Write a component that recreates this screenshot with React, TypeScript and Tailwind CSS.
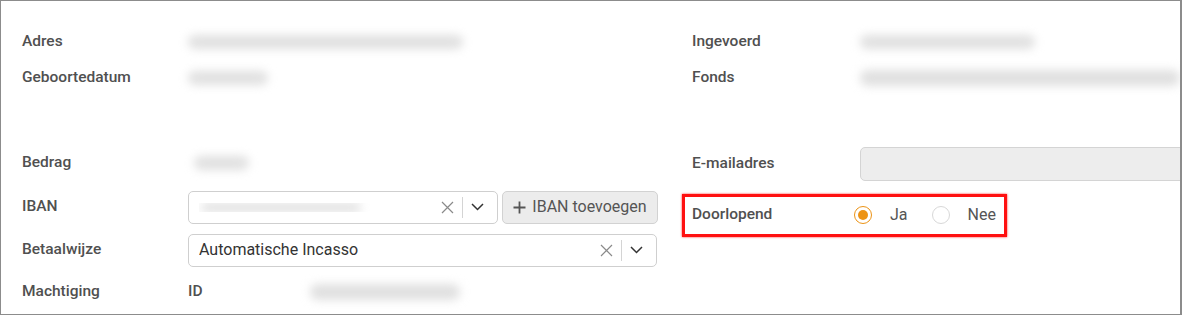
import React from "react";

const font = { fontFamily: "Roboto, 'Noto Sans', Arial, sans-serif" };

function Blur({ w, h = 14 }: { w: number; h?: number }) {
  return <div className="rounded-full bg-[#e0e0e0] blur-[5px]" style={{ width: w, height: h }} />;
}

function Label({ children, w }: { children: React.ReactNode; w: string }) {
  return <div className={`${w} shrink-0 text-[15.5px] font-medium text-[#505050]`}>{children}</div>;
}

function ClearIcon() {
  return (
    <svg width="13" height="13" viewBox="0 0 13 13" className="text-[#8a8a8a]">
      <path d="M1 1 L12 12 M12 1 L1 12" stroke="currentColor" strokeWidth="1.2" fill="none" />
    </svg>
  );
}

function Chevron() {
  return (
    <svg width="13" height="8" viewBox="0 0 13 8" className="text-[#333]">
      <path d="M1 1 L6.5 6.5 L12 1" stroke="currentColor" strokeWidth="1.5" fill="none" />
    </svg>
  );
}

function Select({ width, children }: { width: string; children: React.ReactNode }) {
  return (
    <div className={`${width} flex h-[33px] items-center rounded-[5px] border border-[#cfcfcf] bg-white pl-[10px]`}>
      <div className="flex-1 truncate text-[16px] text-[#333]">{children}</div>
      <div className="flex h-full items-center pr-[1px]">
        <div className="px-[4px]"><ClearIcon /></div>
        <div className="mx-[4px] h-[21px] w-px bg-[#d4d4d4]" />
        <div className="pl-[4px] pr-[12px]"><Chevron /></div>
      </div>
    </div>
  );
}

function Radio({ checked, label }: { checked?: boolean; label: string }) {
  return (
    <div className="flex items-center">
      <div
        className={`flex h-[18px] w-[18px] items-center justify-center rounded-full border ${
          checked ? "border-[#ec9315]" : "border-[#d8d8d8]"
        }`}
      >
        {checked && <div className="h-[10px] w-[10px] rounded-full bg-[#ec9315]" />}
      </div>
      <span className="ml-[18px] text-[16px] text-[#555]">{label}</span>
    </div>
  );
}

export default function App() {
  return (
    <div style={font} className="h-[315px] w-[1182px] overflow-hidden border border-r-2 border-[#8c8c8c] bg-white">
      <div className="flex pt-[23px]">
        {/* left column */}
        <div className="flex w-[691px] shrink-0 flex-col pl-[21px]">
          <div className="flex h-[36px] items-center">
            <Label w="w-[166px]">Adres</Label>
            <Blur w={275} />
          </div>
          <div className="flex h-[36px] items-center">
            <Label w="w-[166px]">Geboortedatum</Label>
            <Blur w={80} />
          </div>
          <div className="mt-[49px] flex h-[36px] items-center">
            <Label w="w-[166px]">Bedrag</Label>
            <div className="pl-[6px]"><Blur w={55} /></div>
          </div>
          <div className="mt-[8px] flex h-[36px] items-center">
            <Label w="w-[166px]">IBAN</Label>
            <Select width="w-[310px]">
              <div className="pl-[2px]"><Blur w={160} h={9} /></div>
            </Select>
            <button className="ml-[4px] flex h-[33px] w-[156px] items-center justify-center gap-[6px] rounded-[5px] border border-[#d2d2d2] bg-[#ececec] text-[16px] text-[#555]">
              <svg width="13" height="13" viewBox="0 0 13 13">
                <path d="M6.5 0.5 V12.5 M0.5 6.5 H12.5" stroke="#555" strokeWidth="1.8" />
              </svg>
              IBAN toevoegen
            </button>
          </div>
          <div className="mt-[7px] flex h-[36px] items-center">
            <Label w="w-[166px]">Betaalwijze</Label>
            <Select width="w-[469px]">Automatische Incasso</Select>
          </div>
          <div className="mt-[6px] flex h-[36px] items-center">
            <Label w="w-[166px]">Machtiging</Label>
            <Label w="w-[122px]">ID</Label>
            <Blur w={150} h={16} />
          </div>
        </div>

        {/* right column */}
        <div className="flex flex-1 flex-col">
          <div className="flex h-[36px] items-center">
            <Label w="w-[168px]">Ingevoerd</Label>
            <Blur w={175} />
          </div>
          <div className="flex h-[36px] items-center">
            <Label w="w-[168px]">Fonds</Label>
            <Blur w={320} h={16} />
          </div>
          <div className="mt-[50px] flex h-[36px] items-center">
            <Label w="w-[168px]">E-mailadres</Label>
            <div className="h-[34px] w-[340px] shrink-0 rounded-[5px] border border-[#d4d4d4] bg-[#ededed]" />
          </div>
          <div className="relative mt-[15px] flex h-[36px] items-center">
            <Label w="w-[162px]">Doorlopend</Label>
            <Radio checked label="Ja" />
            <div className="ml-[24px]"><Radio label="Nee" /></div>
            <div className="pointer-events-none absolute left-[-10px] top-[-3px] h-[43px] w-[325px] border-[3px] border-[#ff1010] shadow-[0_0_2px_#ff3030]" />
          </div>
        </div>
      </div>
    </div>
  );
}
